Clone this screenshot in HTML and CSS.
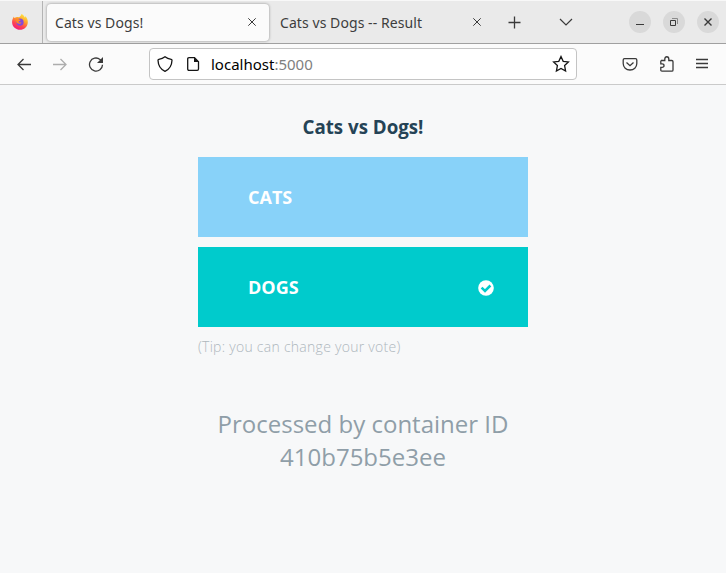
FILE: index.html
```html
<!DOCTYPE html>
<html lang="en">
<head>
<meta charset="utf-8">
<title>Cats vs Dogs!</title>
<link rel="stylesheet" href="styles.css">
</head>
<body>
<header class="tabbar">
  <div class="brand">
    <svg width="18" height="18" viewBox="0 0 18 18">
      <defs>
        <linearGradient id="flame" x1=".8" y1="0" x2=".3" y2="1"><stop offset="0" stop-color="#fff044"/><stop offset=".4" stop-color="#ffa02b"/><stop offset=".7" stop-color="#ff4550"/><stop offset="1" stop-color="#f0187f"/></linearGradient>
      </defs>
      <path fill="url(#flame)" d="M10.5 1c2 1 3 2.400 3.200 3.500.6-.1.600-1 .600-1.500 1.700 1.800 2.700 4 2.500 6.500C16.600 14 13 16.800 9 16.800S1.200 13.700 1.100 9.500C1 7 1.800 5 3 3.500c0 .8.200 1.200.6 1.500C5 3.900 6.500 4 8 4.300c1-.5 2-1.700 2.500-3.300z"/>
      <circle cx="9" cy="9.200" r="3.600" fill="#8548dc"/>
      <path fill="#ff8a25" d="M4.500 5.800c1.500-.8 2.700-.2 3.700.7 1 .2 1.300.4 1.400.8-.5.800-1.800.6-2.100 1.600.4 1.200 2.200.3 3 .9-.8 1.300-3 1.300-4.500.2-.6-.5-.9-1.300-.8-2z"/>
    </svg>
  </div>
  <div class="tab tab-active"><span class="tab-title">Cats vs Dogs!</span>
    <svg class="close" width="10" height="10" viewBox="0 0 10 10"><path d="M1.300 1.300l7.400 7.400M8.700 1.300L1.300 8.700"/></svg>
  </div>
  <div class="tab tab-second"><span class="tab-title">Cats vs Dogs -- Result</span>
    <svg class="close" width="10" height="10" viewBox="0 0 10 10"><path d="M1.300 1.300l7.400 7.400M8.700 1.300L1.300 8.700"/></svg>
  </div>
  <svg class="plus" width="13" height="13" viewBox="0 0 13 13"><path d="M6.500 .5v12M.5 6.500h12"/></svg>
  <svg class="chevron" width="14" height="8" viewBox="0 0 14 8"><path d="M1 1l6 6 6-6"/></svg>
  <div class="window-controls">
    <span class="control"><svg width="22" height="22" viewBox="0 0 22 22"><path d="M7 13.500h8"/></svg></span>
    <span class="control"><svg width="22" height="22" viewBox="0 0 22 22"><path d="M7.500 9.500h5v5h-5z"/><path class="faint" d="M9 7.500h5.500V13"/></svg></span>
    <span class="control"><svg width="22" height="22" viewBox="0 0 22 22"><path class="bold" d="M7.500 7.500l7 7M14.500 7.500l-7 7"/></svg></span>
  </div>
</header>
<nav class="toolbar">
  <svg class="back" width="16" height="16" viewBox="0 0 16 16"><path d="M15 8.500H2M7.500 3L2 8.500 7.500 14"/></svg>
  <svg class="forward" width="16" height="16" viewBox="0 0 16 16"><path d="M1 8.500h13M8.500 3L14 8.500 8.500 14"/></svg>
  <svg class="reload" width="16" height="16" viewBox="0 0 16 16"><path d="M14.500 8.700A6.500 6.500 0 1 1 12 3.400l1.500 1.600"/><path class="fill" d="M15 1v6H9z"/></svg>
  <div class="urlbar">
    <svg class="shield" width="16" height="16" viewBox="0 0 16 16"><path d="M8 .8c2 1.600 4 2.200 6.200 2.500.7.100.8.500.8 1-.2 5-2.200 9-7 11C3.200 13.300 1.200 9.300 1 4.300c0-.5.100-.9.800-1C4 3 6 2.400 8 .8z"/></svg>
    <svg class="doc" width="14" height="16" viewBox="0 0 14 16"><path d="M3 1.700h5.500l4 4V13q0 1.300-1.300 1.300H3Q1.700 14.300 1.700 13V3Q1.700 1.700 3 1.700z"/><path class="fill" d="M8 1.500V6h4.700z"/></svg>
    <span class="url">localhost<span class="port">:5000</span></span>
    <svg class="star" width="18" height="18" viewBox="0 0 18 18"><path d="M9 1.500l2.200 4.800 5.200.6-3.800 3.600 1 5.600L9 13.400l-4.600 2.700 1-5.600L1.600 6.900l5.200-.6z"/></svg>
  </div>
  <svg class="pocket" width="16" height="16" viewBox="0 0 16 16"><path d="M2.500 2.700h11q1.300 0 1.300 1.300v3.500c0 3.800-3 6.500-6.800 6.500S1.200 11.300 1.200 7.500V4q0-1.300 1.300-1.300zM4.500 6.500L8 9.700l3.500-3.200"/></svg>
  <svg class="puzzle" width="16" height="18" viewBox="0 0 16 18"><path d="M2 5.500h3.800V4c0-3 4-3 4 0v1.500h3q1.200 0 1.200 1.200V15q0 1.200-1.200 1.200H3Q1.800 16.200 1.800 15v-2.600H3c2.700 0 2.700-3.500 0-3.500H1.800V5.500"/></svg>
  <svg class="menu" width="12" height="12" viewBox="0 0 12 12"><path d="M0 1.500h12M0 5.500h12M0 9.500h12"/></svg>
</nav>
<main class="page">
  <h1>Cats vs Dogs!</h1>
  <button class="choice cats">CATS</button>
  <button class="choice dogs">DOGS
    <svg class="check" width="16" height="16" viewBox="0 0 16 16"><circle cx="8" cy="8" r="7.800" fill="#fff"/><path d="M3.600 7.600L7 10.900l5.400-5.400"/></svg>
  </button>
  <p class="tip">(Tip: you can change your vote)</p>
  <p class="host">Processed by container ID 410b75b5e3ee</p>
</main>
</body>
</html>
```
FILE: styles.css
```css
* { box-sizing: border-box; }
body {
  margin: 0;
  height: 573px;
  overflow: hidden;
  background: #f7f8f9;
  font-family: "Open Sans", "Noto Sans", sans-serif;
}
svg { display: block; flex: none; fill: none; stroke: #3a3a3a; stroke-width: 1.2; }
.fill { fill: currentColor; stroke: none; }
.tabbar {
  display: flex;
  align-items: center;
  height: 44px;
  background: #eaeaea;
  border-top: 1px solid #f8f8f8;
  border-bottom: 1px solid #a0a0a0;
}
.brand {
  display: flex;
  align-items: center;
  width: 43px;
  height: 42px;
  padding-left: 11px;
  border-right: 1px solid #b4b4b4;
}
.brand svg { stroke: none; }
.tab {
  display: flex;
  align-items: center;
  justify-content: space-between;
  height: 37px;
  padding: 0 12px 0 8px;
  font: 14px "Noto Sans", sans-serif;
  letter-spacing: .07px;
  color: #3d3d3d;
  white-space: nowrap;
}
.tab-active {
  width: 222px;
  margin-left: 4px;
  border-radius: 4px;
  background: #fbfbfb;
  box-shadow: 0 0 3px rgba(0, 0, 0, .4);
}
.tab-second { width: 225px; padding-left: 11px; }
.tab .close { stroke-width: 1; }
.plus { margin-left: 14px; stroke-width: 1.3; }
.chevron { margin-left: 38px; }
.window-controls { display: flex; gap: 12px; margin-left: auto; padding-right: 7px; }
.control { width: 22px; height: 22px; border-radius: 50%; background: #d9d9d9; }
.control svg { stroke-width: 1; }
.control .faint { stroke: #8a8a8a; }
.control .bold { stroke-width: 1.4; }
.toolbar {
  display: flex;
  align-items: center;
  height: 41px;
  background: #fbfbfb;
  border-bottom: 1px solid #cacaca;
}
.toolbar svg { stroke-width: 1.3; color: #3a3a3a; }
.back { margin-left: 16px; }
.forward { margin-left: 20px; }
.toolbar .forward { stroke: #adadad; }
.reload { margin-left: 20px; }
.urlbar {
  display: flex;
  align-items: center;
  width: 428px;
  height: 32px;
  margin-left: 45px;
  padding: 0 6px 0 7px;
  border: 1px solid #c4c4c4;
  border-radius: 4px;
  background: #fff;
}
.toolbar .urlbar svg { stroke: #151515; color: #151515; }
.doc { margin-left: 13px; }
.url { margin-left: 11px; font: 15px "Noto Sans", sans-serif; color: #000; }
.port { color: #808080; }
.star { margin-left: auto; }
.pocket { margin-left: 45px; }
.puzzle { margin-left: 21px; }
.menu { margin-left: 21px; }
.page { width: 330px; margin: 0 auto; }
h1 {
  margin: 29px 0 18px;
  font-size: 18.72px;
  line-height: 25px;
  font-weight: 700;
  text-align: center;
  color: #254356;
}
.choice {
  display: flex;
  align-items: center;
  justify-content: space-between;
  width: 330px;
  height: 80px;
  margin: 0 0 10px;
  padding: 0 34px 0 50px;
  border: 0;
  font: 700 18px "Open Sans", sans-serif;
  color: #fff;
}
.cats { background: #88d2f9; }
.dogs { background: #00cbcc; }
.check { stroke: #00cbcc; stroke-width: 2.5; margin-top: 2px; }
.check circle { stroke: none; }
.tip { margin: 0; font-size: 14px; line-height: 20px; font-weight: 300; letter-spacing: .27px; color: #aeb7bd; }
.host { margin: 50px 0 0; font-size: 24px; line-height: 33px; text-align: center; color: #8f9ea8; }
```
